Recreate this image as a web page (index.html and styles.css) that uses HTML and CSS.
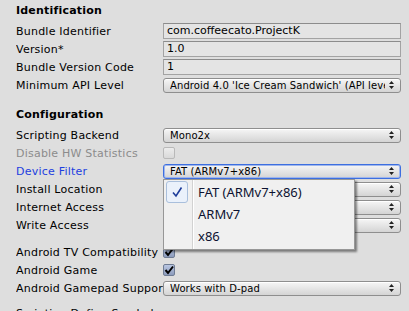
FILE: index.html
```html
<!DOCTYPE html>
<html lang="en">
<head>
  <meta charset="UTF-8" />
  <title>Player Settings - Other Settings</title>
  <link rel="stylesheet" href="styles.css">
</head>
<body>

  <div class="inspector">
    <div class="header">Identification</div>
    <div class="row">
      <span class="label">Bundle Identifier</span>
      <div class="text-field">com.coffeecato.ProjectK</div>
    </div>
    <div class="row">
      <span class="label">Version*</span>
      <div class="text-field">1.0</div>
    </div>
    <div class="row">
      <span class="label">Bundle Version Code</span>
      <div class="text-field">1</div>
    </div>
    <div class="row">
      <span class="label">Minimum API Level</span>
      <div class="popup"><span class="popup-text">Android 4.0 'Ice Cream Sandwich' (API level 14)</span><svg class="arrows" width="5" height="8" viewBox="0 0 5 8"><path d="M2.5 0 L5 3 L0 3 Z M0 5 L5 5 L2.5 8 Z" fill="#222"/></svg></div>
    </div>

    <div class="header section-gap">Configuration</div>
    <div class="row">
      <span class="label">Scripting Backend</span>
      <div class="popup"><span class="popup-text">Mono2x</span><svg class="arrows" width="5" height="8" viewBox="0 0 5 8"><path d="M2.5 0 L5 3 L0 3 Z M0 5 L5 5 L2.5 8 Z" fill="#222"/></svg></div>
    </div>
    <div class="row">
      <span class="label disabled">Disable HW Statistics</span>
      <div class="checkbox off"></div>
    </div>
    <div class="row">
      <span class="label focused">Device Filter</span>
      <div class="popup focus"><span class="popup-text">FAT (ARMv7+x86)</span><svg class="arrows" width="5" height="8" viewBox="0 0 5 8"><path d="M2.5 0 L5 3 L0 3 Z M0 5 L5 5 L2.5 8 Z" fill="#222"/></svg></div>
    </div>
    <div class="row">
      <span class="label">Install Location</span>
      <div class="popup"><span class="popup-text">Prefer External</span><svg class="arrows" width="5" height="8" viewBox="0 0 5 8"><path d="M2.5 0 L5 3 L0 3 Z M0 5 L5 5 L2.5 8 Z" fill="#222"/></svg></div>
    </div>
    <div class="row">
      <span class="label">Internet Access</span>
      <div class="popup"><span class="popup-text">Auto</span><svg class="arrows" width="5" height="8" viewBox="0 0 5 8"><path d="M2.5 0 L5 3 L0 3 Z M0 5 L5 5 L2.5 8 Z" fill="#222"/></svg></div>
    </div>
    <div class="row">
      <span class="label">Write Access</span>
      <div class="popup"><span class="popup-text">Internal Only</span><svg class="arrows" width="5" height="8" viewBox="0 0 5 8"><path d="M2.5 0 L5 3 L0 3 Z M0 5 L5 5 L2.5 8 Z" fill="#222"/></svg></div>
    </div>

    <div class="row space-before">
      <span class="label">Android TV Compatibility</span>
      <div class="checkbox on"><svg width="12" height="12" viewBox="0 0 12 12"><path d="M2.5 6 L5 9 L10 2.5" fill="none" stroke="#000" stroke-width="2"/></svg></div>
    </div>
    <div class="row">
      <span class="label">Android Game</span>
      <div class="checkbox on"><svg width="12" height="12" viewBox="0 0 12 12"><path d="M2.5 6 L5 9 L10 2.5" fill="none" stroke="#000" stroke-width="2"/></svg></div>
    </div>
    <div class="row">
      <span class="label">Android Gamepad Support Level</span>
      <div class="popup"><span class="popup-text">Works with D-pad</span><svg class="arrows" width="5" height="8" viewBox="0 0 5 8"><path d="M2.5 0 L5 3 L0 3 Z M0 5 L5 5 L2.5 8 Z" fill="#222"/></svg></div>
    </div>

    <div class="row symbols">
      <span class="label">Scripting Define Symbols</span>
    </div>

    <div class="menu">
      <div class="menu-item">
        <span class="check"><svg width="12" height="12" viewBox="0 0 12 12"><path d="M2 6.5 L5 10 L10.5 1.5" fill="none" stroke="#1d3c9a" stroke-width="1.6"/></svg></span>
        FAT (ARMv7+x86)
      </div>
      <div class="menu-item"><span class="check empty"></span>ARMv7</div>
      <div class="menu-item"><span class="check empty"></span>x86</div>
    </div>
  </div>

</body>
</html>
```

FILE: styles.css
```css
body {
  margin: 0;
  background-color: #dedede;
  font-family: "DejaVu Sans", Verdana, sans-serif;
  font-size: 11px;
  color: #000;
  height: 311px;
  overflow: hidden;
}
.inspector {
  position: relative;
  width: 389px;
  height: 311px;
  padding: 2px 4px 0 16px;
  border-right: 1px solid #9a9a9a;
  overflow: hidden;
}
.header {
  font-weight: bold;
  letter-spacing: 0.2px;
  height: 18px;
  line-height: 18px;
  margin-bottom: 2px;
}
.section-gap {
  margin-top: 12px;
}
.row {
  display: flex;
  align-items: center;
  height: 18px;
}
.space-before {
  margin-top: 9px;
}
.symbols {
  margin-top: 7px;
}
.label {
  flex: 0 0 147px;
  letter-spacing: 0.22px;
  padding-top: 1px;
  white-space: nowrap;
  overflow: hidden;
}
.label.disabled {
  color: #8c8c8c;
}
.label.focused {
  color: #1d3fe0;
}
.text-field {
  box-sizing: border-box;
  width: 238px;
  height: 16px;
  line-height: 14px;
  padding: 0 3px;
  background-color: #e4e4e4;
  border: 1px solid #a3a3a3;
  border-top-color: #8c8c8c;
  white-space: nowrap;
  overflow: hidden;
}
.popup {
  box-sizing: border-box;
  display: flex;
  align-items: center;
  width: 238px;
  height: 15px;
  padding: 0 6px 0 6px;
  border: 1px solid #8e8e8e;
  border-radius: 3px;
  background: linear-gradient(#f6f6f6, #d4d4d4);
  box-shadow: inset 0 1px 0 #fff;
}
.popup.focus {
  border-color: #3d6fe0;
  box-shadow: 0 0 0 1px #9fb6ec inset;
}
.popup-text {
  flex: 1;
  font-size: 10px;
  letter-spacing: 0.1px;
  white-space: nowrap;
  overflow: hidden;
  line-height: 13px;
}
.arrows {
  flex: none;
  margin-left: 4px;
}
.checkbox {
  box-sizing: border-box;
  width: 12px;
  height: 12px;
  border-radius: 2px;
  border: 1px solid #b9b9b9;
  background: linear-gradient(#ececec, #d9d9d9);
}
.checkbox.on {
  border-color: #6f7c94;
  background: linear-gradient(#b9c6e2, #8d9cbc);
}
.checkbox.on svg {
  display: block;
  margin: -1px 0 0 -1px;
}
.menu {
  position: absolute;
  left: 163px;
  top: 179px;
  box-sizing: border-box;
  width: 192px;
  height: 71px;
  padding: 1px 0;
  border: 1px solid #979797;
  background: linear-gradient(to right, transparent 28px, #d2d2d2 28px, #d2d2d2 29px, #fff 29px, #fff 30px, transparent 30px), #f0f0f0;
  box-shadow: 2px 2px 2px rgba(0, 0, 0, 0.45);
  font-family: "Noto Sans", "Liberation Sans", sans-serif;
  font-size: 13px;
  color: #0c1230;
}
.menu-item {
  display: flex;
  align-items: center;
  height: 22px;
}
.check {
  box-sizing: border-box;
  display: flex;
  align-items: center;
  justify-content: center;
  width: 22px;
  height: 22px;
  margin: 0 10px 0 2px;
  border: 1px solid #a9bfdc;
  border-radius: 3px;
  background-color: #eaf1fb;
}
.check.empty {
  border-color: transparent;
  background: none;
}
```
